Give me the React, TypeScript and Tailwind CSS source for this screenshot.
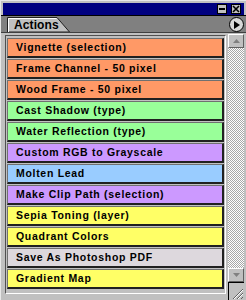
const actions = [
  { name: "Vignette (selection)", color: "bg-[#ff9966]" },
  { name: "Frame Channel - 50 pixel", color: "bg-[#ff9966]" },
  { name: "Wood Frame - 50 pixel", color: "bg-[#ff9966]" },
  { name: "Cast Shadow (type)", color: "bg-[#99ff99]" },
  { name: "Water Reflection (type)", color: "bg-[#99ff99]" },
  { name: "Custom RGB to Grayscale", color: "bg-[#cc99ff]" },
  { name: "Molten Lead", color: "bg-[#99ccff]" },
  { name: "Make Clip Path (selection)", color: "bg-[#cc99ff]" },
  { name: "Sepia Toning (layer)", color: "bg-[#ffff66]" },
  { name: "Quadrant Colors", color: "bg-[#ffff66]" },
  { name: "Save As Photoshop PDF", color: "bg-[#ddd8dd]" },
  { name: "Gradient Map", color: "bg-[#ffff66]" },
];

function TitleButton({ kind }: { kind: "min" | "close" }) {
  return (
    <div className="w-[10px] h-[10px] bg-[#c0c0c0] border border-black flex items-center justify-center">
      {kind === "min" ? (
        <div className="w-[6px] h-[2px] bg-black" />
      ) : (
        <svg width="8" height="8" viewBox="0 0 8 8">
          <path d="M1 1 L7 7 M7 1 L1 7" stroke="black" strokeWidth="1.6" />
        </svg>
      )}
    </div>
  );
}

function ScrollButton({ dir }: { dir: "up" | "down" }) {
  return (
    <div className="h-[14px] bg-[#c0c0c0] border-t border-l border-white border-r border-b border-r-[#606060] border-b-[#606060] flex items-center justify-center">
      <svg width="7" height="4" viewBox="0 0 7 4">
        {dir === "up" ? (
          <path d="M0 4 L3.5 0 L7 4 Z" fill="#808080" />
        ) : (
          <path d="M0 0 L3.5 4 L7 0 Z" fill="#808080" />
        )}
      </svg>
    </div>
  );
}

export default function App() {
  return (
    <div
      className="w-[246px] h-[300px] bg-[#c0c0c0] border-l border-t border-[#e8e8e8] flex flex-col overflow-hidden"
      style={{ fontFamily: '"Liberation Sans", Arial, sans-serif' }}
    >
      {/* title bar */}
      <div className="mx-[2px] mt-[2px] h-[12px] bg-[#000080] flex items-center justify-end gap-[4px] pr-[3px]">
        <TitleButton kind="min" />
        <TitleButton kind="close" />
      </div>

      {/* tab bar */}
      <div className="h-[17px] bg-[#808080] border-t border-black flex items-end justify-between pl-[6px] pr-[2px]">
        <div className="relative w-[63px] h-[15px] flex items-center pl-[7px]">
          <svg className="absolute inset-0" width="63" height="15" viewBox="0 0 63 15">
            <path d="M0.5 15 L0.5 0.5 L50 0.5 L62.5 15 Z" fill="#c0c0c0" stroke="#202020" strokeWidth="1" />
            <path d="M1.5 15 L1.5 1.5 L49.5 1.5" fill="none" stroke="#ffffff" strokeWidth="1" />
          </svg>
          <span className="relative text-[12px] font-bold text-black leading-none tracking-[0.1px]">Actions</span>
        </div>
        <div className="w-[15px] h-[15px] rounded-full bg-[#d8d8d8] border border-black flex items-center justify-center">
          <svg width="6" height="8" viewBox="0 0 6 8" className="ml-[1px]">
            <path d="M0 0 L6 4 L0 8 Z" fill="black" />
          </svg>
        </div>
      </div>

      {/* body */}
      <div className="flex-1 flex pl-[4px] pr-[2px] pt-[1px] border-t border-[#404040]">
        <div className="flex-1 mt-[1px] mb-[6px] border-l border-t border-[#505050] border-r border-b border-r-white border-b-white flex flex-col pl-[1px] pr-[1px] pt-[1px]">
          {actions.map((a) => (
            <div key={a.name} className="h-[21px] pt-[1px]">
              <div
                className={`h-full ${a.color} border-l border-t border-[#707070] border-r-2 border-b-2 border-r-[#202020] border-b-[#202020] flex items-center pl-[8px]`}
              >
                <span className="text-[10.5px] font-bold text-black tracking-[0.7px] leading-none whitespace-nowrap">
                  {a.name}
                </span>
              </div>
            </div>
          ))}
        </div>

        {/* scrollbar */}
        <div className="w-[16px] ml-[2px] flex flex-col">
          <ScrollButton dir="up" />
          <div className="flex-1 bg-[repeating-conic-gradient(#ffffff_0_25%,#a8a8a8_0_50%)] bg-[length:2px_2px]" />
          <ScrollButton dir="down" />
          <div className="h-[18px] border-t border-l border-black bg-[#c0c0c0] flex items-end justify-end">
            <svg width="14" height="14" viewBox="0 0 14 14">
              <path d="M13 3 L3 13 M13 7 L7 13 M13 11 L11 13" stroke="#606060" strokeWidth="1" />
              <path d="M13 4 L4 13 M13 8 L8 13" stroke="#ffffff" strokeWidth="1" />
            </svg>
          </div>
        </div>
      </div>
    </div>
  );
}
